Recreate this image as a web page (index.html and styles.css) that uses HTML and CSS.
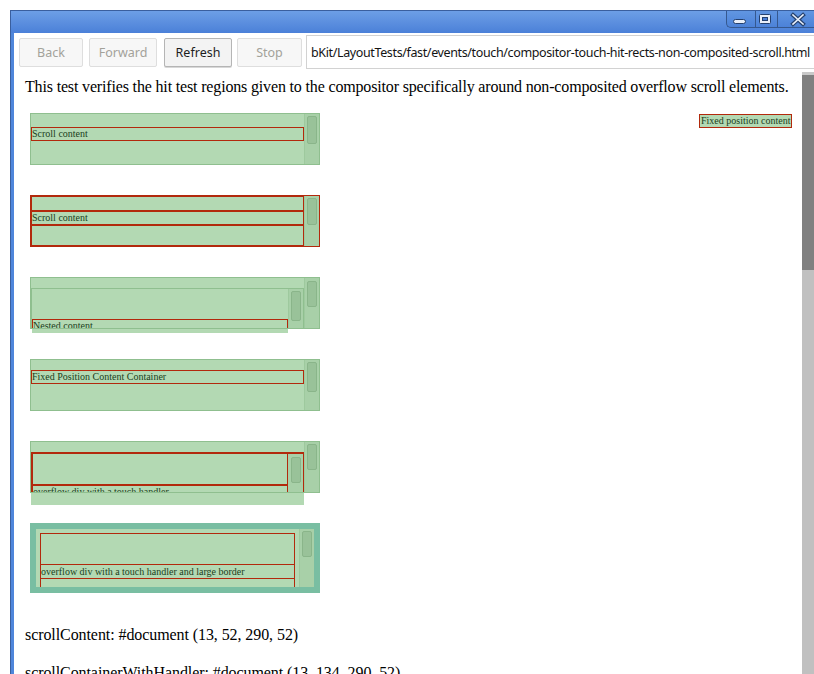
FILE: index.html
```html
<!DOCTYPE html>
<html>
<head>
<meta charset="utf-8">
<title>compositor-touch-hit-rects-non-composited-scroll</title>
<link rel="stylesheet" href="styles.css">
</head>
<body>
<div class="window">
  <div class="titlebar">
    <div class="controls">
      <div class="ctl ctl-min">
        <svg width="28" height="17" viewBox="0 0 28 17"><rect x="6.5" y="8.5" width="12" height="4" rx="2" fill="#e9eff9" stroke="#24406e"/></svg>
      </div>
      <div class="ctl ctl-max">
        <svg width="21" height="17" viewBox="0 0 21 17"><rect x="3.5" y="3.5" width="11" height="9" rx="1" fill="#e9eff9" stroke="#24406e"/><rect x="6.5" y="6.5" width="5" height="3" fill="#4a7fd8" stroke="#24406e"/></svg>
      </div>
      <div class="ctl ctl-close">
        <svg width="36" height="17" viewBox="0 0 36 17"><path d="M15 4 L25 13 M25 4 L15 13" stroke="#24406e" stroke-width="4" stroke-linecap="square"/><path d="M15 4 L25 13 M25 4 L15 13" stroke="#e9eff9" stroke-width="1.6" stroke-linecap="square"/></svg>
      </div>
    </div>
  </div>
  <div class="client">
    <div class="toolbar">
      <div class="btn btn-dis w-back">Back</div>
      <div class="btn btn-dis w-fwd">Forward</div>
      <div class="btn btn-on w-ref">Refresh</div>
      <div class="btn btn-dis w-stop">Stop</div>
      <div class="url">bKit/LayoutTests/fast/events/touch/compositor-touch-hit-rects-non-composited-scroll.html</div>
    </div>
    <div class="view">
      <div class="page">
        <p class="intro">This test verifies the hit test regions given to the compositor specifically around non-composited overflow scroll elements.</p>

        <div class="box">
          <div class="bd">
            <div class="hit hit-1">Scroll content</div>
          </div>
          <div class="sb"><div class="thumb th-28"></div></div>
        </div>

        <div class="box box-red">
          <div class="bd bd-red">
            <div class="hit2">Scroll content</div>
          </div>
          <div class="sb"><div class="thumb th-27"></div></div>
        </div>

        <div class="box">
          <div class="bd bd-vis">
            <div class="nested">
              <div class="nbd">
                <div class="hit hit-n">Nested content</div>
              </div>
              <div class="sb"><div class="thumb th-30"></div></div>
            </div>
            <div class="strip strip-3"></div>
          </div>
          <div class="sb"><div class="thumb th-26 th-top1"></div></div>
        </div>

        <div class="box">
          <div class="bd">
            <div class="hit hit-4">Fixed Position Content Container</div>
          </div>
          <div class="sb"><div class="thumb th-30"></div></div>
        </div>

        <div class="box">
          <div class="bd bd-vis">
            <div class="nested nested-red">
              <div class="nbd nbd-red">
                <div class="hline hline-5"></div>
                <div class="rowtext">overflow div with a touch handler</div>
              </div>
              <div class="sb sb-red"><div class="thumb th-26 th-top1"></div></div>
            </div>
            <div class="strip strip-5"></div>
          </div>
          <div class="sb"><div class="thumb th-26"></div></div>
        </div>

        <div class="box6">
          <div class="bd bd6">
            <div class="hit6">
              <div class="hit6-top"></div>
              <div class="hit6-row">overflow div with a touch handler and large border</div>
              <div class="hit6-bot"></div>
            </div>
          </div>
          <div class="sb"><div class="thumb th-26"></div></div>
        </div>

        <p class="log log-first">scrollContent: #document (13, 52, 290, 52)</p>
        <p class="log">scrollContainerWithHandler: #document (13, 134, 290, 52)</p>

        <div class="fixed">Fixed position content</div>
      </div>
      <div class="vscroll"><div class="vthumb"></div></div>
    </div>
  </div>
</div>
</body>
</html>
```

FILE: styles.css
```css
html, body {
  margin: 0;
  padding: 0;
  background: #ffffff;
  overflow: hidden;
}

.window {
  margin: 10px 0 0 10px;
  width: 804px;
  height: 664px;
  box-sizing: border-box;
  border-top: 1px solid #3a5f9e;
  border-left: 1px solid #3a5f9e;
  background: #4f86db;
  display: flex;
  flex-direction: column;
}

.titlebar {
  height: 22px;
  flex: none;
  background: linear-gradient(#6d9fe6, #4b80d8);
  display: flex;
  justify-content: flex-end;
}

.controls {
  display: flex;
  height: 17px;
  box-sizing: border-box;
  border-left: 1px solid #35588f;
  border-bottom: 1px solid #35588f;
  border-bottom-left-radius: 5px;
  background: linear-gradient(#6196e2, #4c82d8);
}

.ctl {
  height: 16px;
  display: flex;
  align-items: flex-start;
}
.ctl svg { display: block; }
.ctl-min { width: 28px; border-right: 1px solid #35588f; }
.ctl-max { width: 21px; border-right: 1px solid #35588f; }
.ctl-close { width: 36px; }

.client {
  flex: 1;
  margin-left: 3px;
  background: #ffffff;
  display: flex;
  flex-direction: column;
  min-height: 0;
}

.toolbar {
  height: 39px;
  flex: none;
  box-sizing: border-box;
  display: flex;
  align-items: flex-start;
  padding: 5px 0 0 5px;
  font-family: "Noto Sans", "Open Sans", sans-serif;
  font-size: 12.5px;
}

.btn {
  height: 29px;
  box-sizing: border-box;
  border: 1px solid #dedede;
  border-radius: 2px;
  background: #f7f7f7;
  color: #a3a29a;
  display: flex;
  align-items: center;
  justify-content: center;
}
.btn-on {
  border-color: #b5b5b5;
  background: #f3f3f3;
  color: #1e1e1e;
  box-shadow: 0 1px 0 #d8d8d8;
}
.w-back { width: 64px; margin-right: 6px; }
.w-fwd { width: 68px; margin-right: 7px; }
.w-ref { width: 68px; margin-right: 5px; }
.w-stop { width: 65px; margin-right: 4px; }

.url {
  flex: 1;
  height: 34px;
  margin-top: -3px;
  box-sizing: border-box;
  border: 1px solid #d2d2d2;
  border-right: 0;
  background: #ffffff;
  color: #141414;
  padding-left: 4px;
  white-space: nowrap;
  overflow: hidden;
  display: flex;
  align-items: center;
  letter-spacing: -0.37px;
}

.view {
  flex: 1;
  display: flex;
  min-height: 0;
}

.page {
  flex: 1;
  position: relative;
  overflow: hidden;
  padding: 6px 0 0 12px;
  font-family: "Liberation Serif", "Times New Roman", serif;
  font-size: 16px;
  color: #000;
}

.intro {
  margin: 0 0 17px -1px;
  line-height: 18px;
  white-space: nowrap;
  letter-spacing: -0.16px;
}

.vscroll {
  width: 12px;
  flex: none;
  background: #c0c0c0;
  border-top: 3px solid #c9c9c9;
}
.vthumb {
  height: 195px;
  background: #808080;
}

/* test boxes */
.box {
  width: 290px;
  height: 52px;
  box-sizing: border-box;
  margin: 0 0 30px 4px;
  border: 1px solid #8fbf8f;
  background: #b3d9b3;
  display: flex;
  font-size: 10px;
  line-height: 12px;
  color: #203e20;
}
.box-red { border-color: #b2290c; }

.bd {
  width: 273px;
  flex: none;
  box-sizing: border-box;
  overflow: hidden;
}
.bd-vis { overflow: visible; }
.bd-red {
  border: 1px solid #b2290c;
  padding-top: 13px;
}

.sb {
  width: 15px;
  flex: none;
  box-sizing: border-box;
  background: #a8d0a8;
  border-left: 1px solid #9ec99e;
  padding: 2px 0 0 2px;
}
.sb-red {
  width: 16px;
  border-left: 1px solid #b2290c;
  padding-left: 3px;
}
.thumb {
  width: 10px;
  box-sizing: border-box;
  border: 1px solid #8ab58a;
  border-radius: 2px;
  background: #99c299;
}
.th-26 { height: 26px; }
.th-27 { height: 27px; }
.th-28 { height: 28px; }
.th-30 { height: 30px; }
.th-top1 { margin-top: 1px; }

.hit {
  border: 1px solid #b2290c;
  white-space: nowrap;
}
.hit-1 { margin-top: 13px; }
.hit-4 { margin-top: 10px; }

.hit2 {
  border-top: 2px solid #b2290c;
  border-bottom: 2px solid #b2290c;
  white-space: nowrap;
}

/* nested scroller (box 3 and 5) */
.nested {
  width: 273px;
  height: 40px;
  box-sizing: border-box;
  margin-top: 10px;
  border: 1px solid #8fbf8f;
  border-bottom: 0;
  display: flex;
  overflow: hidden;
}
.nbd {
  width: 256px;
  flex: none;
  overflow: hidden;
}
.hit-n {
  margin-top: 30px;
  border-bottom: 0;
}
.strip {
  background: #b3d9b3;
}
.strip-3 {
  width: 256px;
  height: 4px;
  margin: 1px 0 0 1px;
}

.nested-red {
  border: 0;
  border-top: 2px solid #b2290c;
  border-left: 2px solid #b2290c;
  border-right: 1px solid #b2290c;
}
.nbd-red {
  width: 254px;
  padding-top: 30px;
}
.hline-5 {
  height: 2px;
  background: #b2290c;
}
.rowtext {
  white-space: nowrap;
}
.strip-5 {
  width: 273px;
  height: 12px;
  margin-top: 1px;
}

/* box 6 with large border */
.box6 {
  width: 290px;
  height: 70px;
  box-sizing: border-box;
  margin: 0 0 0 4px;
  border: 6px solid #79bea2;
  background: #b3d9b3;
  display: flex;
  font-size: 10px;
  line-height: 12px;
  color: #203e20;
}
.bd6 {
  width: 263px;
  padding: 4px 4px 0 4px;
}
.hit6 {
  border: 1px solid #b2290c;
  border-bottom: 0;
  height: 60px;
}
.hit6-top {
  height: 30px;
  border-bottom: 1px solid #b2290c;
}
.hit6-row {
  height: 14px;
  padding-top: 1px;
  box-sizing: border-box;
  white-space: nowrap;
  border-bottom: 1px solid #b2290c;
}

.log {
  margin: 20px 0 0 -1px;
  line-height: 18px;
  white-space: nowrap;
  letter-spacing: -0.08px;
}
.log-first { margin-top: 33px; }

.fixed {
  position: absolute;
  top: 42px;
  left: 685px;
  border: 1px solid #b2290c;
  background: #b3d9b3;
  color: #203e20;
  font-size: 10px;
  line-height: 12px;
  padding: 0 1px;
  white-space: nowrap;
}
```
